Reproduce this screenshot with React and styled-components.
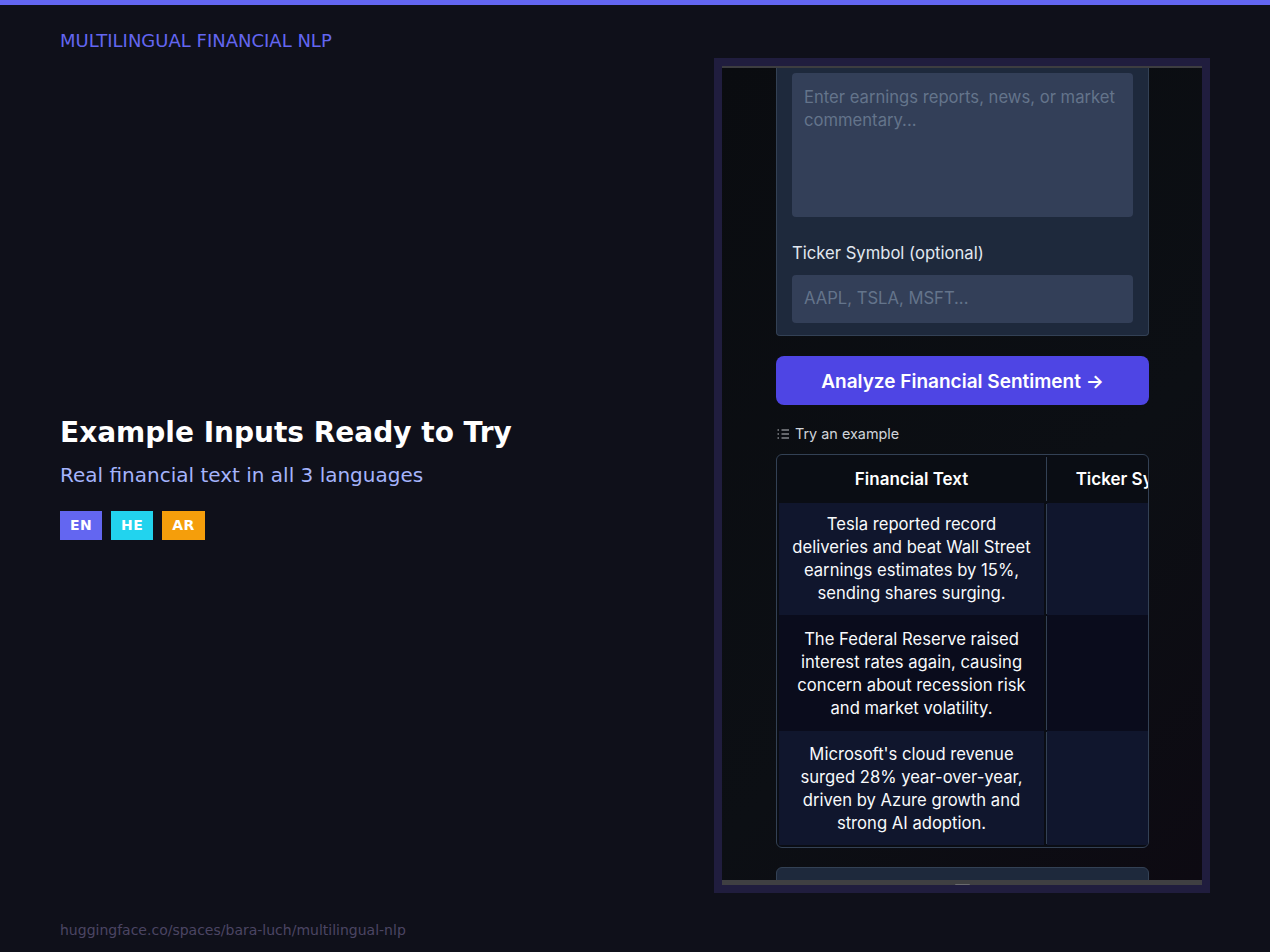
import React from "react";
import styled, { createGlobalStyle } from "styled-components";

const GlobalStyle = createGlobalStyle`
  * { box-sizing: border-box; }
  html, body { margin: 0; padding: 0; background: #0f101a; }
  body { font-family: "DejaVu Sans", sans-serif; }
`;

const Page = styled.div`
  width: 1270px;
  height: 952px;
  overflow: hidden;
  background: #0f101a;
  border-top: 5px solid #6366f1;
  display: grid;
  grid-template-columns: 714px 496px;
`;

const InfoColumn = styled.div`
  height: 947px;
  padding: 25px 0 13px 60px;
  display: flex;
  flex-direction: column;
  justify-content: space-between;
`;

const Brand = styled.div`
  font-size: 18px;
  line-height: 21px;
  color: #6366f1;
`;

const Pitch = styled.div`
  display: flex;
  flex-direction: column;
  margin-bottom: 17px;
`;

const Title = styled.h1`
  margin: 0;
  font-size: 28px;
  line-height: 33px;
  font-weight: 700;
  color: #ffffff;
`;

const Subtitle = styled.p`
  margin: 15px 0 0;
  font-size: 20px;
  line-height: 23px;
  color: #a5b4fc;
`;

const Badges = styled.div`
  display: flex;
  gap: 9px;
  margin-top: 24px;
`;

const Badge = styled.span`
  height: 29px;
  padding: 0 10px 1px;
  display: flex;
  align-items: center;
  font-size: 14px;
  font-weight: 700;
  letter-spacing: 0.4px;
  color: #ffffff;
  background: ${({ $bg }) => $bg};
`;

const Footer = styled.div`
  font-size: 14px;
  line-height: 17px;
  color: #4b4563;
`;

const Frame = styled.div`
  width: 496px;
  height: 835px;
  margin-top: 53px;
  border: 8px solid #201d3e;
  background: #0a0c12;
  display: flex;
  flex-direction: column;
`;

const Viewport = styled.div`
  flex: 1;
  min-height: 0;
  overflow: hidden;
  border-top: 2px solid #3d3d40;
  background: linear-gradient(135deg, #0a0c10, #0c0f14 60%, #0d0a12);
  padding: 0 53px 0 54px;
  font-family: Inter, sans-serif;
  display: flex;
  flex-direction: column;
`;

const BottomBar = styled.div`
  flex: none;
  position: relative;
  height: 5px;
  background: #3f3f42;
`;

const Bump = styled.div`
  position: absolute;
  left: 233px;
  bottom: 0;
  width: 15px;
  height: 1px;
  border-radius: 7px 7px 0 0;
  background: #6a6a6d;
`;

const Panel = styled.div`
  flex: none;
  background: #1e293c;
  border: 1px solid #334155;
  border-top: none;
  border-radius: 0 0 4px 4px;
  padding: 5px 15px 12px;
  display: flex;
  flex-direction: column;
`;

const TextArea = styled.div`
  height: 144px;
  padding: 13px 12px;
  border-radius: 4px;
  background: #333f58;
  color: #64748b;
  font-size: 16.64px;
  line-height: 23px;
`;

const FieldLabel = styled.div`
  margin-top: 24px;
  margin-bottom: 10px;
  font-size: 16.64px;
  line-height: 24px;
  color: #e2e8f0;
`;

const TextInput = styled.div`
  height: 48px;
  padding: 0 12px 2px;
  border-radius: 4px;
  background: #333f58;
  color: #64748b;
  font-size: 16.64px;
  display: flex;
  align-items: center;
`;

const Submit = styled.button`
  flex: none;
  height: 49px;
  margin-top: 20px;
  padding: 1px 0 0;
  border: none;
  border-radius: 8px;
  background: #4e45e4;
  color: #ffffff;
  font-family: inherit;
  font-size: 19px;
  font-weight: 600;
`;

const ExamplesLabel = styled.div`
  margin-top: 20px;
  height: 18px;
  display: flex;
  align-items: center;
  gap: 5px;
  font-size: 14.4px;
  color: #d1d5db;
`;

const Examples = styled.div`
  flex: none;
  margin-top: 12px;
  height: 394px;
  border: 1px solid #334155;
  border-radius: 6px;
  overflow: hidden;
  padding-left: 2px;
  background: #0a0d14;
`;

const Row = styled.div`
  display: grid;
  grid-template-columns: 265px 3px 175px;
  height: ${({ $h }) => $h}px;
`;

const Cell = styled.div`
  padding: ${({ $pad }) => $pad || 0}px 12px 0;
  color: #f8fafc;
  font-size: 16.64px;
  line-height: 23px;
  text-align: center;
  display: flex;
  align-items: center;
  justify-content: center;
  background: ${({ $bg }) => $bg || "transparent"};
`;

const HeadCell = styled(Cell)`
  padding: 0;
  font-size: 17px;
  font-weight: 600;
  color: #ffffff;
  white-space: nowrap;
`;

const Divider = styled.div`
  width: 1px;
  margin: ${({ $inset }) => $inset}px 0 ${({ $inset }) => $inset}px 2px;
  background: #334155;
`;

const NextPanel = styled.div`
  flex: none;
  margin-top: 19px;
  height: 40px;
  background: #1e293c;
  border: 1px solid #334155;
  border-radius: 6px 6px 0 0;
`;

const ListIcon = () => (
  <svg width="14" height="14" viewBox="0 0 14 14" fill="none" stroke="#d1d5db" strokeWidth="0.9">
    <path d="M1.5 3h1.5M1.5 7h1.5M1.5 11h1.5M5.5 3H13M5.5 7H13M5.5 11H13" />
  </svg>
);

const rows = [
  {
    h: 112,
    pad: 0,
    bg: "#10162d",
    text: "Tesla reported record deliveries and beat Wall Street earnings estimates by 15%, sending shares surging.",
  },
  {
    h: 116,
    pad: 2,
    bg: "#0a0c1c",
    text: "The Federal Reserve raised interest rates again, causing concern about recession risk and market volatility.",
  },
  {
    h: 114,
    pad: 2,
    bg: "#10162d",
    text: "Microsoft's cloud revenue surged 28% year-over-year, driven by Azure growth and strong AI adoption.",
  },
];

export default function App() {
  return (
    <>
      <GlobalStyle />
      <Page>
        <InfoColumn>
          <Brand>MULTILINGUAL FINANCIAL NLP</Brand>
          <Pitch>
            <Title>Example Inputs Ready to Try</Title>
            <Subtitle>Real financial text in all 3 languages</Subtitle>
            <Badges>
              <Badge $bg="#6366f1">EN</Badge>
              <Badge $bg="#22d3ee">HE</Badge>
              <Badge $bg="#f59e0b">AR</Badge>
            </Badges>
          </Pitch>
          <Footer>huggingface.co/spaces/bara-luch/multilingual-nlp</Footer>
        </InfoColumn>
        <Frame>
          <Viewport>
            <Panel>
              <TextArea>Enter earnings reports, news, or market commentary...</TextArea>
              <FieldLabel>Ticker Symbol (optional)</FieldLabel>
              <TextInput>AAPL, TSLA, MSFT...</TextInput>
            </Panel>
            <Submit>Analyze Financial Sentiment →</Submit>
            <ExamplesLabel>
              <ListIcon />
              Try an example
            </ExamplesLabel>
            <Examples>
              <Row $h={48}>
                <HeadCell>Financial Text</HeadCell>
                <Divider $inset={2} />
                <HeadCell>Ticker Symbol</HeadCell>
              </Row>
              {rows.map((row) => (
                <Row key={row.text} $h={row.h}>
                  <Cell $bg={row.bg} $pad={row.pad}>{row.text}</Cell>
                  <Divider $inset={1} />
                  <Cell $bg={row.bg} />
                </Row>
              ))}
            </Examples>
            <NextPanel />
          </Viewport>
          <BottomBar>
            <Bump />
          </BottomBar>
        </Frame>
      </Page>
    </>
  );
}
